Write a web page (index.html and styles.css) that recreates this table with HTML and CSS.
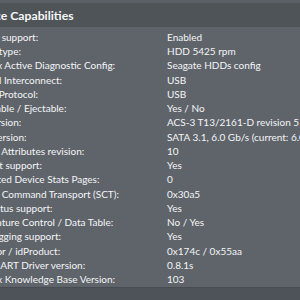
FILE: index.html
```html
<!DOCTYPE html>
<html>
<head>
<meta charset="utf-8">
<link rel="stylesheet" href="styles.css">
</head>
<body>
<div class="window">
  <div class="topstrip"></div>
  <div class="header"><h1 class="title">Device Capabilities</h1></div>
  <div class="rows">
    <div class="label">SMART support:</div><div class="value">Enabled</div>
    <div class="label">Device type:</div><div class="value">HDD 5425 rpm</div>
    <div class="label">DriveDx Active Diagnostic Config:</div><div class="value">Seagate HDDs config</div>
    <div class="label">Physical Interconnect:</div><div class="value">USB</div>
    <div class="label">Logical Protocol:</div><div class="value">USB</div>
    <div class="label">Removable / Ejectable:</div><div class="value">Yes / No</div>
    <div class="label">ATA Version:</div><div class="value">ACS-3 T13/2161-D revision 5</div>
    <div class="label">SATA Version:</div><div class="value">SATA 3.1, 6.0 Gb/s (current: 6.0 Gb/s)</div>
    <div class="label">SMART Attributes revision:</div><div class="value">10</div>
    <div class="label">Self-test support:</div><div class="value">Yes</div>
    <div class="label">Supported Device Stats Pages:</div><div class="value">0</div>
    <div class="label">SMART Command Transport (SCT):</div><div class="value">0x30a5</div>
    <div class="label">SCT Status support:</div><div class="value">Yes</div>
    <div class="label">SCT Feature Control / Data Table:</div><div class="value">No / Yes</div>
    <div class="label">Error logging support:</div><div class="value">Yes</div>
    <div class="label">idVendor / idProduct:</div><div class="value">0x174c / 0x55aa</div>
    <div class="label">SAT SMART Driver version:</div><div class="value">0.8.1s</div>
    <div class="label">DriveDx Knowledge Base Version:</div><div class="value">103</div>
  </div>
  <div class="footer"></div>
</div>
</body>
</html>
```
FILE: styles.css
```css
html, body {
  margin: 0;
  padding: 0;
  width: 300px;
  height: 300px;
  overflow: hidden;
  background: #5f646b;
}
.window {
  width: 300px;
  height: 300px;
  overflow: hidden;
  display: flex;
  flex-direction: column;
  font-family: Lato, "Liberation Sans", sans-serif;
  color: #f4f5f6;
}
.topstrip {
  height: 3px;
  background: #5b6067;
  flex: none;
}
.header {
  height: 24px;
  background: #4f5459;
  flex: none;
  display: flex;
  align-items: center;
  overflow: hidden;
}
.title {
  margin: 0 0 0 -30px;
  font-size: 12.2px;
  font-weight: bold;
  white-space: nowrap;
  color: #f6f7f8;
}
.rows {
  flex: 1;
  display: grid;
  grid-template-columns: 201px 1fr;
  grid-auto-rows: 14.24px;
  margin-left: -34px;
  padding-top: 3px;
  font-size: 10px;
  line-height: 14.24px;
  white-space: nowrap;
  overflow: hidden;
}
.footer {
  height: 12px;
  flex: none;
  background: #4e535a;
  border-top: 1px solid #474c52;
}
```
